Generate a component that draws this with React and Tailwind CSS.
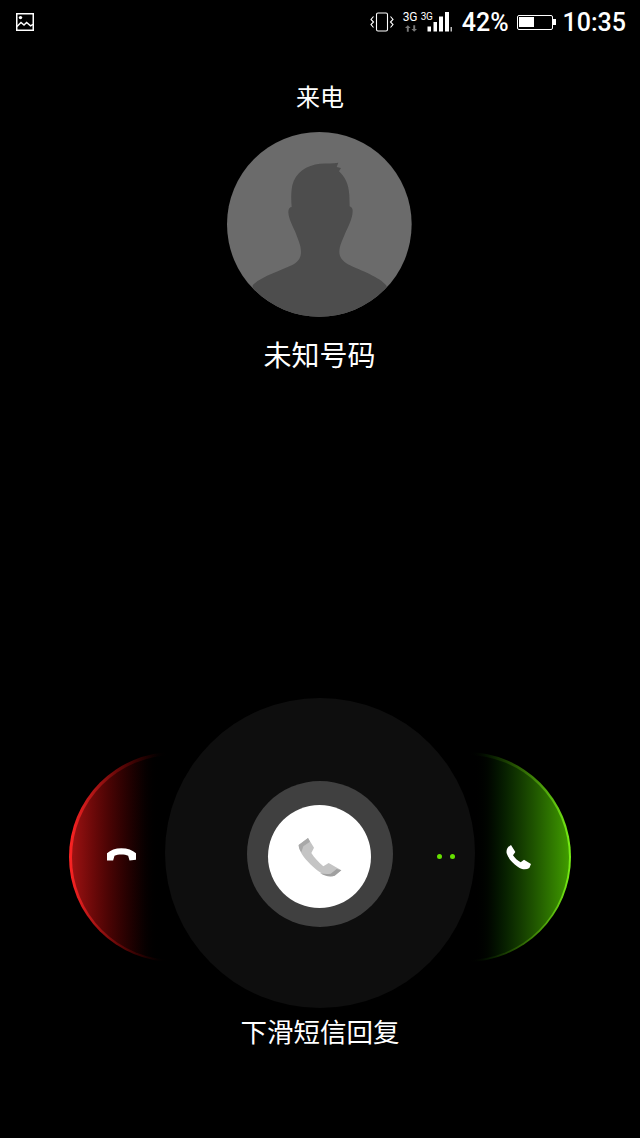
const cjk = "font-['Noto_Sans_CJK_SC','Noto_Sans',sans-serif]";

const ImageIcon = () => (
  <svg width="18" height="18" viewBox="0 0 18 18" fill="none" stroke="#fff">
    <rect x="0.75" y="0.75" width="16.5" height="16.5" strokeWidth="1.5" />
    <circle cx="4.5" cy="4.6" r="1.7" fill="#fff" stroke="none" />
    <path d="M1 13.5l4-4 3 2.6 2.6-2.6 4 3.4 2.4-1.6" strokeWidth="1.4" />
  </svg>
);

const VibrateIcon = () => (
  <svg width="24" height="20" viewBox="0 0 24 20" fill="none" stroke="#fff" strokeWidth="1.1">
    <rect x="6.500" y="1" width="11" height="18" rx="1.500" />
    <path d="M3.500 4.500L1 7.500l2.500 2.500L1 12.500l2.500 3" />
    <path d="M20.500 4.500l2.500 3-2.500 2.500 2.500 2.500-2.500 3" />
  </svg>
);

const SignalBars = () => (
  <svg width="27" height="20" viewBox="0 0 27 20" fill="#fff">
    <rect x="0.500" y="14.500" width="3.500" height="5" />
    <rect x="6.500" y="10" width="3.500" height="9.500" />
    <rect x="12" y="4.500" width="4" height="15" />
    <rect x="18" y="0" width="4" height="19.500" />
    <rect x="23.500" y="15" width="1.500" height="4.500" fill="#bbb" />
  </svg>
);

const Arrows = () => (
  <svg width="12" height="7" viewBox="0 0 15 8" fill="#777">
    <path d="M3.500 0L7 3.500H4.700V8H2.300V3.500H0z" />
    <path d="M11.500 8L8 4.500h2.300V0h2.400v4.500H15z" />
  </svg>
);

const Battery = () => (
  <div className="flex items-center">
    <div className="w-[36px] h-[15px] border-[1.5px] border-white rounded-[2px] p-[1.5px]">
      <div className="w-[15px] h-full bg-white" />
    </div>
    <div className="w-[3px] h-[6px] bg-white" />
  </div>
);

const Avatar = () => (
  <svg width="185" height="185" viewBox="51 35 555 555">
    <defs>
      <clipPath id="avatarClip">
        <circle cx="328" cy="312" r="277" />
      </clipPath>
    </defs>
    <circle cx="328" cy="312" r="277" fill="#6b6b6b" />
    <path
      clipPath="url(#avatarClip)"
      d="M128 495C150 470 215 450 245 435C265 425 273 412 273 395C273 375 265 360 258 340C250 320 235 295 235 275C235 265 240 260 245 260C243 235 243 215 247 195C256 155 290 135 330 130C350 128 368 130 385 127L380 140L393 143L387 153C405 170 416 190 418 225L419 258C425 260 428 265 428 272C428 295 412 325 405 340C398 358 388 375 388 395C388 412 400 425 420 435C450 450 510 470 530 497L530 600L128 600Z"
      fill="#4d4d4d"
    />
  </svg>
);

const HangupIcon = () => (
  <svg width="29" height="13" viewBox="170 328 85 37" fill="#fff">
    <path d="M170 343C180 333 195 328 212 328C230 328 245 333 255 343V362L236 364L232 350C222 345 202 345 192 350L188 364L170 364Z" />
  </svg>
);

const AnswerIcon = () => (
  <svg width="26" height="26" viewBox="0 0 78 78" fill="#fff">
    <path d="M15 3L28 24L21 34C27 43 34 50 44 55L54 47L75 60L70 72C60 78 48 77 35 68C20 58 7 44 2 28C0 18 4 9 15 3Z" />
  </svg>
);

const CenterPhone = () => (
  <svg width="44" height="40" viewBox="20 22 132 120">
    <path
      d="M50 25L68 54L60 70C70 85 82 98 96 110L112 100L150 122L130 138C110 145 88 132 66 112C44 92 24 70 22 46Z"
      fill="#c4c4c4"
    />
    <path d="M22 46L50 25L56 36L36 50L30 68C25 60 22 54 22 46Z" fill="#a8a8a8" />
    <path d="M86 130C100 140 118 143 130 138L150 122L136 118L118 132C108 134 96 133 86 130Z" fill="#a0a0a0" />
  </svg>
);

export default function App() {
  return (
    <div className={`w-[640px] h-[1138px] bg-black text-white flex flex-col overflow-hidden ${cjk}`}>
      <div className="h-[44px] flex items-center justify-between pl-[16px] pr-[14px] font-['Roboto',sans-serif]">
        <ImageIcon />
        <div className="flex items-center">
          <VibrateIcon />
          <div className="flex flex-col items-start justify-between w-[18px] h-[20px] ml-[9px]">
            <span className="text-[12px] leading-[10px] tracking-[-0.3px]">3G</span>
            <div className="ml-[2px]"><Arrows /></div>
          </div>
          <div className="relative w-[33px] h-[20px] pl-[6px]">
            <SignalBars />
            <span className="absolute left-0 top-0 text-[10px] leading-[10px] tracking-[-0.3px]">3G</span>
          </div>
          <span className="text-[25px] leading-none font-medium ml-[8px]">42%</span>
          <div className="ml-[8px]"><Battery /></div>
          <span className="text-[25px] leading-none font-medium ml-[7px]">10:35</span>
        </div>
      </div>

      <div className="flex flex-col items-center">
        <div className="mt-[36px] text-[24px] leading-[32px]">来电</div>
        <div className="mt-[20px] -ml-[1px]"><Avatar /></div>
        <div className="mt-[17px] -ml-[1px] text-[28px] leading-[40px]">未知号码</div>
      </div>

      <div className="mt-[324px] flex items-center justify-center">
        <div className="relative w-[210px] h-[210px] -mr-[114px] mt-[8px] rounded-full p-[2.500px] bg-gradient-to-r from-[#ff2424] to-black to-[48%]">
          <div className="w-full h-full rounded-full bg-gradient-to-r from-[#9c1212] to-black to-[44%] flex items-center pl-[35px] pb-[5px]">
            <HangupIcon />
          </div>
        </div>

        <div className="relative z-10 w-[310px] h-[310px] rounded-full bg-[#0e0e0e] flex items-center justify-center shrink-0">
          <div className="w-[146px] h-[146px] mt-[2px] rounded-full bg-[#404040] flex items-center justify-center">
            <div className="w-[103px] h-[103px] mt-[5px] mr-[1px] rounded-full bg-white flex items-center justify-center">
              <CenterPhone />
            </div>
          </div>
          <div className="absolute left-[272px] top-[155.500px] flex gap-[8px]">
            <div className="w-[5px] h-[5px] rounded-full bg-[#66e000]" />
            <div className="w-[5px] h-[5px] rounded-full bg-[#66e000]" />
          </div>
        </div>

        <div className="relative w-[210px] h-[210px] -ml-[114px] mt-[8px] rounded-full p-[2.500px] bg-gradient-to-l from-[#78f016] to-black to-[50%]">
          <div className="w-full h-full rounded-full bg-gradient-to-l from-[#409c00] to-black to-[48%] flex items-center justify-end pr-[37px]">
            <AnswerIcon />
          </div>
        </div>
      </div>

      <div className="mt-[4px] text-center text-[26.500px] leading-[38px]">下滑短信回复</div>
    </div>
  );
}
